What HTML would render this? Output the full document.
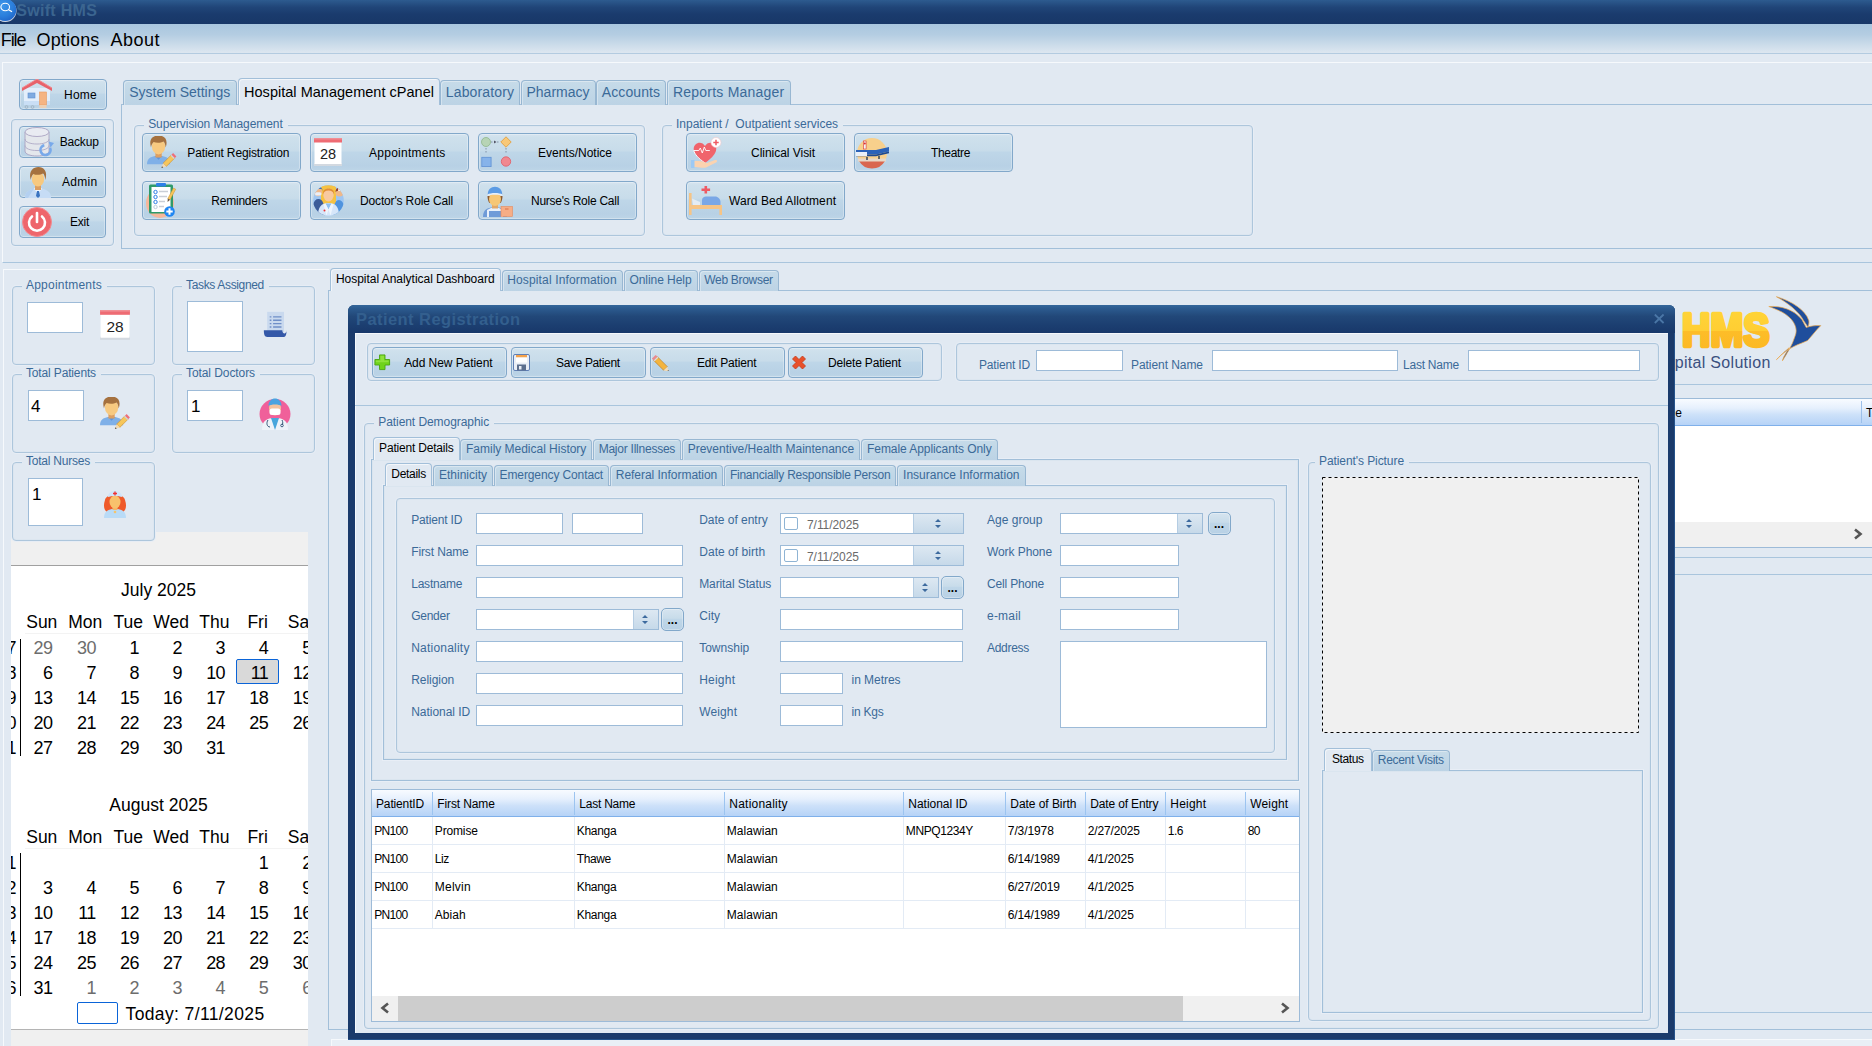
<!DOCTYPE html>
<html lang="en"><head><meta charset="utf-8"><title>Swift HMS</title>
<style>

html,body{margin:0;padding:0;}
body{width:1872px;height:1046px;overflow:hidden;position:relative;background:#e1e9f2;font-family:'Liberation Sans',sans-serif;font-size:12px;}
div,span.t,svg{position:absolute;box-sizing:border-box;}
span.t{white-space:pre;}
.btn{border:1px solid #82a8ca;border-radius:4px;background:linear-gradient(#d6e4ef 0%,#cee0ec 10%,#c8dcea 44%,#bed6e8 50%,#b8d1e5 86%,#bdd5e7 100%);box-shadow:inset 0 0 0 1px rgba(255,255,255,.3);}
.sb{border:1px solid #82a8ca;border-radius:5px;background:linear-gradient(#d6e4ef 0%,#c8dcea 44%,#bed6e8 50%,#b8d1e5 100%);box-shadow:inset 0 0 0 1px rgba(255,255,255,.3);}
.gb{border:1px solid #adc6dc;border-radius:4px;box-shadow:inset 0 0 0 1px #dce6f0,0 0 0 1px #e7edf5;}
.pn{border:1px solid #a2bfd9;background:#e1e9f2;box-shadow:inset 0 0 0 1px #dae5ef,0 0 0 1px #e8eef6;}
.tab{border:1px solid #98b7d2;border-bottom:none;border-radius:4px 4px 0 0;background:linear-gradient(#c6dbe9 0%,#bcd3e5 100%);box-shadow:inset 1px 1px 0 rgba(255,255,255,.35);}
.tab.act{background:#e1e9f2;border-color:#a2bfd9;box-shadow:inset 1px 1px 0 rgba(255,255,255,.6);}
.in{background:#fff;border:1px solid #9dbbd8;}
.hl{height:1px;background:#a2bfd9;}
.vl{width:1px;background:#a2bfd9;}

</style></head>
<body>
<div style="left:0px;top:0px;width:1872px;height:24px;background:linear-gradient(#2d5b8f 0%,#204578 30%,#1a3b6d 60%,#183768 100%);"></div>
<svg style="left:0px;top:0px" width="18" height="24" viewBox="0 0 18 24"><defs><radialGradient id="ag" cx=".35" cy=".3" r=".8"><stop offset="0" stop-color="#3f97ea"/><stop offset=".6" stop-color="#2b7fdc"/><stop offset="1" stop-color="#1f63c8"/></radialGradient></defs><circle cx="5.3" cy="10.8" r="11.2" fill="#d5dbe6"/><circle cx="5.3" cy="10" r="11" fill="url(#ag)"/><ellipse cx="5.2" cy="7" rx="4.3" ry="3.8" fill="none" stroke="#fff" stroke-width="1.1"/><path d="M8.6 9.700l3 1.8" stroke="#fff" stroke-width="1.3" stroke-linecap="round"/></svg>
<span class="t" style="top:0px;line-height:21px;font-size:16px;color:#3b6590;letter-spacing:0.31px;font-weight:700;left:16.2px;">Swift HMS</span>
<div style="left:0px;top:24px;width:1872px;height:29.5px;background:linear-gradient(#a9c6df 0%,#b4cde2 35%,#cfdeeb 75%,#dfe8f1 100%);"></div>
<div style="left:0px;top:53px;width:1872px;height:1px;background:#b3cbe0;"></div>
<span class="t" style="top:28px;line-height:24px;font-size:18px;color:#000;letter-spacing:-1.1px;left:0.8px;">File</span>
<span class="t" style="top:28px;line-height:24px;font-size:18px;color:#000;letter-spacing:0.14px;left:36.5px;">Options</span>
<span class="t" style="top:28px;line-height:24px;font-size:18px;color:#000;letter-spacing:0.49px;left:110.5px;">About</span>
<div style="left:2px;top:62px;width:1874px;height:201px;background:#e1e9f2;border-top:1px solid #f6f9fc;border-left:1px solid #f6f9fc;border-bottom:1px solid #a9c5dd;"></div>
<div class="btn" style="left:19px;top:79px;width:88px;height:31px;"></div>
<span class="t" style="top:86px;line-height:18px;font-size:12px;color:#000;letter-spacing:0.25px;left:64px;">Home</span>
<svg style="left:22px;top:79px" width="32" height="31" viewBox="0 0 32 31"><rect x="2" y="9" width="26" height="17" fill="#e3eefb"/><rect x="2" y="22" width="26" height="4" fill="#c9def5"/><path d="M0 9L15 0L30 9V12L15 4L0 12Z" fill="#e8626a"/><path d="M0 9L15 0L30 9" fill="none" stroke="#f08a8f" stroke-width="1"/><rect x="6" y="14" width="7" height="5" fill="#7faae0" stroke="#5f8fd0" stroke-width=".6"/><rect x="17.5" y="13" width="7" height="13" fill="#f5b483" stroke="#e79a62" stroke-width=".6"/><rect x="17.5" y="26" width="7" height="3" fill="#ecd0b5"/><circle cx="4.5" cy="28" r="1.4" fill="none" stroke="#9ab" stroke-width=".7"/><circle cx="10.5" cy="28" r="1.4" fill="none" stroke="#9ab" stroke-width=".7"/></svg>
<div class="gb" style="left:11px;top:119px;width:103px;height:127px;"></div>
<div class="btn" style="left:19px;top:126px;width:87px;height:31.5px;"></div>
<span class="t" style="top:133px;line-height:18px;font-size:12px;color:#000;letter-spacing:-0.17px;left:59.7px;">Backup</span>
<div class="btn" style="left:19px;top:166px;width:87px;height:31.5px;"></div>
<span class="t" style="top:173px;line-height:18px;font-size:12px;color:#000;letter-spacing:0.3px;left:62px;">Admin</span>
<div class="btn" style="left:19px;top:206px;width:87px;height:31.5px;"></div>
<span class="t" style="top:213px;line-height:18px;font-size:12px;color:#000;letter-spacing:-0.25px;left:70px;">Exit</span>
<svg style="left:23px;top:126px" width="32" height="32" viewBox="0 0 32 32"><path d="M2 6v19c0 3 5 5 12 5s12-2 12-5V6" fill="#e4e7ec" stroke="#a9a3c2" stroke-width=".9"/><ellipse cx="14" cy="6" rx="12" ry="4.5" fill="#e9ebf2" stroke="#a9a3c2" stroke-width=".9"/><path d="M2 13c0 3 5 5 12 5s12-2 12-5M2 19.5c0 3 5 5 12 5s12-2 12-5" fill="none" stroke="#aea9c6" stroke-width=".9"/><circle cx="22.5" cy="24" r="5" fill="none" stroke="#78a9ea" stroke-width="2.6" stroke-dasharray="24 8" transform="rotate(-25 22.5 24)"/><path d="M25.5 15.5l5.5 1.5-3.5 4.5z" fill="#78a9ea"/></svg>
<svg style="left:24.5px;top:166.5px" width="26" height="31" viewBox="0 0 26 31"><path d="M0 31c0-6.5 4-8 9-9.5h8c5 1.5 9 3 9 9.5z" fill="#c6dcf5"/><path d="M0 31c0-6.5 4-8 9-9.5l-6 9.5z" fill="#b4d0f0"/><path d="M9 21.5l4 5.5 4-5.5-2-1h-4z" fill="#eef5fd"/><path d="M12 24h2l1 5-2 2-2-2z" fill="#3b74c0"/><rect x="10" y="17" width="6" height="6" fill="#dc9f62"/><ellipse cx="13" cy="12" rx="6.2" ry="7.6" fill="#f7c980"/><path d="M5.8 13c-2.800-9.5 3-13 7.500-13c5.5 0 9.700 4 7 13c-.3-3.200-1-5.200-2.200-6.400c-3 1.600-7.200 1.600-9.800.4c-1.5 1.600-2.200 3.500-2.500 6z" fill="#a5713f"/></svg>
<svg style="left:22px;top:207px" width="30" height="30" viewBox="0 0 30 30"><circle cx="15" cy="15" r="14.5" fill="#ee666c"/><circle cx="15" cy="15" r="14.5" fill="none" stroke="#f28a8f" stroke-width="1"/><path d="M10 9.500a8 8 0 1 0 10 0" fill="none" stroke="#fff" stroke-width="2.6" stroke-linecap="round"/><path d="M15 6v9" stroke="#fff" stroke-width="2.6" stroke-linecap="round"/></svg>
<div style="left:121px;top:104px;width:1760px;height:145px;border:1px solid #a2bfd9;border-right:none;"></div>
<div class="tab" style="left:123px;top:80px;width:113.5px;height:24.5px;"></div>
<span class="t" style="top:82px;line-height:20px;font-size:14px;color:#3b6a98;letter-spacing:-0.01px;left:103px;width:153.5px;text-align:center;">System Settings</span>
<div class="tab" style="left:440px;top:80px;width:80px;height:24.5px;"></div>
<span class="t" style="top:82px;line-height:20px;font-size:14px;color:#3b6a98;letter-spacing:0.16px;left:420px;width:120px;text-align:center;">Laboratory</span>
<div class="tab" style="left:520.5px;top:80px;width:75px;height:24.5px;"></div>
<span class="t" style="top:82px;line-height:20px;font-size:14px;color:#3b6a98;letter-spacing:-0px;left:500.5px;width:115px;text-align:center;">Pharmacy</span>
<div class="tab" style="left:596px;top:80px;width:70px;height:24.5px;"></div>
<span class="t" style="top:82px;line-height:20px;font-size:14px;color:#3b6a98;letter-spacing:0.11px;left:576px;width:110px;text-align:center;">Accounts</span>
<div class="tab" style="left:666.5px;top:80px;width:124.5px;height:24.5px;"></div>
<span class="t" style="top:82px;line-height:20px;font-size:14px;color:#3b6a98;letter-spacing:0.22px;left:646.5px;width:164.5px;text-align:center;">Reports Manager</span>
<div class="tab act" style="left:238px;top:78.2px;width:202px;height:27px;"></div>
<span class="t" style="top:82px;line-height:20px;font-size:14.5px;color:#000;letter-spacing:0.02px;left:218px;width:242px;text-align:center;">Hospital Management cPanel</span>
<div class="gb" style="left:134px;top:125px;width:511px;height:110.5px;"></div>
<div style="left:144.2px;top:123px;width:143.6px;height:5px;background:#e1e9f2;"></div>
<span class="t" style="top:115px;line-height:18px;font-size:12px;color:#3b6a98;letter-spacing:-0.07px;left:148.2px;">Supervision Management</span>
<div class="btn" style="left:142px;top:133px;width:159px;height:39px;"></div>
<span class="t" style="top:144px;line-height:18px;font-size:12px;color:#000;letter-spacing:-0.14px;left:187.3px;">Patient Registration</span>
<div class="btn" style="left:310px;top:133px;width:159px;height:39px;"></div>
<span class="t" style="top:144px;line-height:18px;font-size:12px;color:#000;letter-spacing:0.26px;left:369px;">Appointments</span>
<div class="btn" style="left:478px;top:133px;width:159px;height:39px;"></div>
<span class="t" style="top:144px;line-height:18px;font-size:12px;color:#000;letter-spacing:-0px;left:538px;">Events/Notice</span>
<div class="btn" style="left:142px;top:181px;width:159px;height:39px;"></div>
<span class="t" style="top:192px;line-height:18px;font-size:12px;color:#000;letter-spacing:-0.23px;left:211.3px;">Reminders</span>
<div class="btn" style="left:310px;top:181px;width:159px;height:39px;"></div>
<span class="t" style="top:192px;line-height:18px;font-size:12px;color:#000;letter-spacing:-0.15px;left:360px;">Doctor&#x27;s Role Call</span>
<div class="btn" style="left:478px;top:181px;width:159px;height:39px;"></div>
<span class="t" style="top:192px;line-height:18px;font-size:12px;color:#000;letter-spacing:-0.25px;left:531px;">Nurse&#x27;s Role Call</span>
<svg style="left:146px;top:136px" width="34" height="34" viewBox="0 0 34 34"><g transform="translate(1 0) scale(1.05)"><path d="M0 27c0-5.5 3-7 7.5-8h7c4.500 1 7.5 2.5 7.5 8z" fill="#7fb0e8"/><path d="M7.5 19l3.5 3.5 3.5-3.5z" fill="#5f94d8"/><rect x="8" y="14.5" width="6" height="6" fill="#dc9f62"/><ellipse cx="11" cy="10" rx="6.3" ry="7.5" fill="#f7c980"/><path d="M3.8 11c-2.600-9 2.700-11.5 7.200-11.5c5.300 0 9.500 3.5 6.800 11.5c-.3-3-1-4.800-2-5.800c-3 1.500-7 1.500-9.500.4c-1.500 1.500-2.200 3.200-2.5 5.400z" fill="#a5713f"/></g><g transform="translate(16.5 31) scale(1.05) rotate(45)"><rect x="-2.2" y="-14" width="4.4" height="11" fill="#f6c65a" stroke="#c98a2b" stroke-width=".5"/><rect x="-2.2" y="-16.5" width="4.4" height="2.5" fill="#ef6f78"/><rect x="-2.2" y="-14.3" width="4.4" height="1.2" fill="#cfd4da"/><path d="M-2.2-3L0 1.500L2.2-3z" fill="#f3d9b0"/><path d="M-.8-.2L0 1.500L.8-.2z" fill="#444"/></g></svg>
<svg style="left:314px;top:137.5px" width="28" height="30" viewBox="0 0 28 30"><rect x="0" y="25" width="28" height="3" fill="#d3d9e0"/><rect x=".5" y="3.5" width="27" height="22.5" fill="#fff"/><rect x="0" y="0" width="28" height="4.5" fill="#ee6b73"/><rect x="0" y="0" width="28" height="1.5" fill="#f08f95"/><text x="14" y="21" font-family="'Liberation Sans',sans-serif" font-size="14.5" text-anchor="middle" fill="#222">28</text></svg>
<svg style="left:481px;top:136px" width="34" height="34" viewBox="0 0 34 34"><path d="M5 12v5M25 12v5M10 6h8" stroke="#7a8aa0" stroke-width=".9" stroke-dasharray="1.5 1.5" fill="none"/><path d="M13 4.500l2.5 1.5-2.5 1.500z" fill="#556"/><circle cx="5" cy="6" r="4.5" fill="#b7d4b5" stroke="#8fb58b" stroke-width=".8"/><path d="M25 .8l5.2 5.2-5.2 5.2-5.2-5.200z" fill="#f8c878" stroke="#e09a3a" stroke-width=".8"/><rect x=".8" y="21.3" width="9.3" height="9.3" fill="#86b3ea" stroke="#5f92d4" stroke-width=".8"/><circle cx="25" cy="25.5" r="4.7" fill="#f08890" stroke="#e05a64" stroke-width=".8"/></svg>
<svg style="left:146px;top:183px" width="34" height="36" viewBox="0 0 34 36"><ellipse cx="14" cy="20" rx="14" ry="15" fill="#f6b79a"/><rect x="3" y="1.5" width="24" height="29" rx="1.5" fill="#2f9a6a"/><rect x="5.5" y="4" width="19" height="25" fill="#fff"/><rect x="10" y="0" width="10" height="3.6" rx="1" fill="#2f80e8"/><g fill="none" stroke="#2f80e8" stroke-width="1"><circle cx="9.5" cy="9" r="1.7"/><circle cx="9.5" cy="14" r="1.7"/><circle cx="9.5" cy="19" r="1.7"/><circle cx="9.5" cy="24" r="1.7" stroke="#bcd"/></g><g stroke="#c9ced6" stroke-width="1.3"><path d="M13 8.500h9M13 13.500h8M13 18.500h6M13 23.500h5"/></g><g transform="translate(22 18) rotate(28)"><rect x="-1.3" y="-14" width="2.6" height="12" fill="#f6c65a" stroke="#c98a2b" stroke-width=".4"/><path d="M-1.3-2L0 1l1.3-3z" fill="#654"/></g><circle cx="23.5" cy="28.5" r="5.3" fill="#1f86f2"/><path d="M23.5 25.300v6.400M20.3 28.500h6.4" stroke="#fff" stroke-width="2"/></svg>
<svg style="left:312.5px;top:184px" width="31" height="32" viewBox="0 0 31 32"><defs><clipPath id="dc"><circle cx="15.5" cy="16.5" r="15.3"/></clipPath></defs><g clip-path="url(#dc)"><rect x="0" y="0" width="31" height="32" fill="#9ec6f2"/><rect x="8" y="0" width="15" height="20" fill="#f5c243"/><path d="M-1 32c0-12 2-17 6.5-17s6 5 6 17z" fill="#3c5c98"/><circle cx="5" cy="8" r="4.2" fill="#efb88a"/><path d="M.6 7c0-6 9-6 9 0l-1-2h-7z" fill="#3f72ba"/><rect x="2" y="8.2" width="6.5" height="3.3" rx="1.5" fill="#e9eff8"/><path d="M20 32c0-10 2-16 6-16s6 6 6 16z" fill="#4f93de"/><circle cx="26.5" cy="8.5" r="4" fill="#efb88a"/><path d="M22.5 8c0-6.5 8-6.5 8 0c-2-2-5.5-2-8 0z" fill="#93402e"/><rect x="25.2" y="0" width="2" height="7" fill="#fff"/><circle cx="26.2" cy="2.5" r="1" fill="#e33"/><path d="M5 32c0-9 3-13 10.5-13s10.5 4 10.5 13z" fill="#d6e6f9"/><path d="M12.5 19.500l3 6 3-6z" fill="#8fc0f0"/><path d="M15.5 25.500l-3-6-2 1 3 11zM15.5 25.500l3-6 2 1-3 11z" fill="#eef5fd"/><ellipse cx="15.5" cy="11" rx="5.2" ry="6.5" fill="#f8c9a0"/><path d="M10 10.500c-1.5-8 12.5-8 11 0c-1-3-2.3-4-5.5-4s-4.5 1-5.5 4z" fill="#e28f38"/><circle cx="11.5" cy="26.5" r="1" fill="#e33"/></g></svg>
<svg style="left:483px;top:184px" width="30" height="33" viewBox="0 0 30 33"><path d="M0 33c0-6.5 3-8.5 8-9.500h8c5 1 8 3 8 9.500z" fill="#6f9bd8"/><path d="M4 33v-7l4-2h8l4 2v7z" fill="#e8f0fa"/><path d="M6 33v-6h12v6z" fill="#6f9bd8"/><rect x="9" y="18" width="6" height="6.5" fill="#e2a868"/><path d="M4.5 12c0 3 1 6 2 7h11c1-1 2-4 2-7z" fill="#8c5a2e"/><ellipse cx="12" cy="15" rx="6" ry="7" fill="#f6c776"/><path d="M4.8 11c-.8-11 15.2-11 14.4 0c-2-1.8-12.4-1.8-14.4 0z" fill="#5b9be4"/><path d="M4.6 10.500c3-2 11.8-2 14.8 0l.1 1.600c-3-1.8-12-1.8-15 0z" fill="#e6effa"/><rect x="18" y="22.5" width="11.5" height="10" fill="#f6ad86" stroke="#e58a5e" stroke-width=".6"/><rect x="22" y="24.5" width="3.5" height="1" fill="#d9734a"/></svg>
<div class="gb" style="left:662px;top:125px;width:591px;height:110.5px;"></div>
<div style="left:672px;top:123px;width:171px;height:5px;background:#e1e9f2;"></div>
<span class="t" style="top:115px;line-height:18px;font-size:12px;color:#3b6a98;letter-spacing:-0px;left:676px;">Inpatient /  Outpatient services</span>
<div class="btn" style="left:686px;top:133px;width:159px;height:39px;"></div>
<span class="t" style="top:144px;line-height:18px;font-size:12px;color:#000;letter-spacing:-0.03px;left:751px;">Clinical Visit</span>
<div class="btn" style="left:854px;top:133px;width:159px;height:39px;"></div>
<span class="t" style="top:144px;line-height:18px;font-size:12px;color:#000;letter-spacing:-0.34px;left:931px;">Theatre</span>
<div class="btn" style="left:686px;top:181px;width:159px;height:39px;"></div>
<span class="t" style="top:192px;line-height:18px;font-size:12px;color:#000;letter-spacing:0.08px;left:729px;">Ward Bed Allotment</span>
<svg style="left:690.5px;top:137px" width="34" height="34" viewBox="0 0 34 34"><path d="M14 26C2 18 1 11 4.5 7.500c3-3 7.5-2 9.5 1.500c2-3.5 6.5-4.5 9.5-1.500c3.5 3.5 2.5 10.5-9.5 18.500z" fill="#f0646c"/><path d="M14 26C7 21 3.5 17 2.8 13.500h5l1.5-2.5 2 5 2-6 1.5 3.500h4" fill="none" stroke="#fff" stroke-width=".9"/><circle cx="25" cy="5.5" r="5" fill="#fff" stroke="#f2c6c8" stroke-width=".6"/><path d="M25 2.800v5.400M22.3 5.500h5.4" stroke="#ef5b63" stroke-width="1.5"/><path d="M2 24h6c3 0 5 1 8 2l8-3c2-.5 3 1.5 1 2.500l-10 5c-3 1-7-.5-10-.5h-3z" fill="#fbd3b0"/><rect x="0" y="23" width="3.5" height="8" fill="#9cc9f5"/></svg>
<svg style="left:855px;top:135.5px" width="36" height="34" viewBox="0 0 36 34"><circle cx="17" cy="17" r="15" fill="#f8d08c"/><path d="M4 25h26a15 15 0 0 1-26 0z" fill="#d9664f"/><rect x="3" y="22.5" width="28" height="3" fill="#e8d8c8"/><rect x="8.5" y="5" width="2.6" height="8" fill="#f4f4f4" stroke="#d33" stroke-width=".6"/><circle cx="9.8" cy="7.5" r="1" fill="#d33"/><path d="M1 14h20l13-3v4.500l-13 3h-20z" fill="#2b62b8"/><path d="M1 18.500h20l13-3v1.800l-13 3h-20z" fill="#1d4a92"/><rect x="1" y="16" width="11" height="4" fill="#eaf0f8"/><path d="M12 21v3M24 20v3" stroke="#345" stroke-width="1.5"/></svg>
<svg style="left:689px;top:186px" width="34" height="32" viewBox="0 0 34 32"><path d="M12.5 2.500h3v-2.500h2.600v2.500h3v2.600h-3v2.500h-2.600v-2.500h-3z" fill="#ee5a64"/><path d="M13 14c0-2 2-3.5 4-3.500h9c3 0 5.5 2.5 5.5 5.500v3h-18.500z" fill="#7aa7e6"/><path d="M3 12.500l8 3.500v3.500h-7z" fill="#e4ecf5"/><rect x="0" y="7" width="2.6" height="22" fill="#f6c486"/><rect x="0" y="19" width="33" height="4" fill="#f6c486"/><rect x="30.4" y="19" width="2.6" height="10" fill="#f6c486"/></svg>
<div style="left:3px;top:269px;width:326px;height:790px;background:#e1e9f2;border-top:1px solid #f6f9fc;border-left:1px solid #f6f9fc;"></div>
<div style="left:11px;top:532px;width:297px;height:520px;background:#f0f0f0;"></div>
<div style="left:11px;top:565px;width:297px;height:465px;background:#fff;border-top:1px solid #a0a0a0;border-bottom:1px solid #b4b4b4;"></div>
<div style="left:12px;top:286px;width:143px;height:79px;background:#e1e9f2;border:1px solid #adc6dc;border-radius:4px;box-shadow:inset 0 0 0 1px #dce6f0,0 0 0 1px #e7edf5;"></div>
<div style="left:22px;top:284px;width:84.5px;height:5px;background:#e1e9f2;"></div>
<span class="t" style="top:276px;line-height:18px;font-size:12px;color:#3b6a98;letter-spacing:0.22px;left:26px;">Appointments</span>
<div style="left:172px;top:286px;width:143px;height:79px;background:#e1e9f2;border:1px solid #adc6dc;border-radius:4px;box-shadow:inset 0 0 0 1px #dce6f0,0 0 0 1px #e7edf5;"></div>
<div style="left:182px;top:284px;width:86.5px;height:5px;background:#e1e9f2;"></div>
<span class="t" style="top:276px;line-height:18px;font-size:12px;color:#3b6a98;letter-spacing:-0.34px;left:186px;">Tasks Assigned</span>
<div style="left:12px;top:374px;width:143px;height:79px;background:#e1e9f2;border:1px solid #adc6dc;border-radius:4px;box-shadow:inset 0 0 0 1px #dce6f0,0 0 0 1px #e7edf5;"></div>
<div style="left:22px;top:372px;width:78.5px;height:5px;background:#e1e9f2;"></div>
<span class="t" style="top:364px;line-height:18px;font-size:12px;color:#3b6a98;letter-spacing:-0.15px;left:26px;">Total Patients</span>
<div style="left:172px;top:374px;width:143px;height:79px;background:#e1e9f2;border:1px solid #adc6dc;border-radius:4px;box-shadow:inset 0 0 0 1px #dce6f0,0 0 0 1px #e7edf5;"></div>
<div style="left:182px;top:372px;width:77.5px;height:5px;background:#e1e9f2;"></div>
<span class="t" style="top:364px;line-height:18px;font-size:12px;color:#3b6a98;letter-spacing:-0.08px;left:186px;">Total Doctors</span>
<div style="left:12px;top:462px;width:143px;height:79px;background:#e1e9f2;border:1px solid #adc6dc;border-radius:4px;box-shadow:inset 0 0 0 1px #dce6f0,0 0 0 1px #e7edf5;"></div>
<div style="left:22px;top:460px;width:72.5px;height:5px;background:#e1e9f2;"></div>
<span class="t" style="top:452px;line-height:18px;font-size:12px;color:#3b6a98;letter-spacing:-0.23px;left:26px;">Total Nurses</span>
<div class="in" style="left:27px;top:302px;width:56px;height:31px;"></div>
<div class="in" style="left:187px;top:301px;width:56px;height:51px;"></div>
<div class="in" style="left:28px;top:390px;width:56px;height:31px;"></div>
<div class="in" style="left:187px;top:390px;width:56px;height:31px;"></div>
<div class="in" style="left:28px;top:478px;width:55px;height:48px;"></div>
<span class="t" style="top:395px;line-height:23px;font-size:17px;color:#000;left:31px;">4</span>
<span class="t" style="top:395px;line-height:23px;font-size:17px;color:#000;left:191px;">1</span>
<span class="t" style="top:483px;line-height:23px;font-size:17px;color:#000;left:32px;">1</span>
<svg style="left:100px;top:310px" width="30" height="32" viewBox="0 0 28 30"><rect x="0" y="25" width="28" height="3" fill="#d3d9e0"/><rect x=".5" y="3.5" width="27" height="22.5" fill="#fff"/><rect x="0" y="0" width="28" height="4.5" fill="#ee6b73"/><rect x="0" y="0" width="28" height="1.5" fill="#f08f95"/><text x="14" y="21" font-family="'Liberation Sans',sans-serif" font-size="14.5" text-anchor="middle" fill="#222">28</text></svg>
<svg style="left:263px;top:311px" width="25.2" height="26.9" viewBox="0 0 30 32"><path d="M5 1h20v24h-20z" fill="#c9d9ee"/><path d="M1 23h22c0 5 5 5 5 0v0c0 6-1 8-4 8h-19c-3 0-4-3-4-8z" fill="#3458a8"/><g stroke="#6f8fc8" stroke-width="1.6"><path d="M8 7h2M12 7h10M8 11h2M12 11h10M8 15h2M12 15h10M8 19h2M12 19h10"/></g></svg>
<svg style="left:99px;top:397px" width="34" height="34" viewBox="0 0 34 34"><g transform="translate(1 0) scale(1.05)"><path d="M0 27c0-5.5 3-7 7.5-8h7c4.500 1 7.5 2.5 7.5 8z" fill="#7fb0e8"/><path d="M7.5 19l3.5 3.5 3.5-3.5z" fill="#5f94d8"/><rect x="8" y="14.5" width="6" height="6" fill="#dc9f62"/><ellipse cx="11" cy="10" rx="6.3" ry="7.5" fill="#f7c980"/><path d="M3.8 11c-2.600-9 2.700-11.5 7.200-11.5c5.300 0 9.500 3.5 6.800 11.5c-.3-3-1-4.800-2-5.800c-3 1.500-7 1.500-9.500.4c-1.500 1.500-2.200 3.200-2.5 5.400z" fill="#a5713f"/></g><g transform="translate(17 31) scale(1.05) rotate(45)"><rect x="-2.2" y="-14" width="4.4" height="11" fill="#f6c65a" stroke="#c98a2b" stroke-width=".5"/><rect x="-2.2" y="-16.5" width="4.4" height="2.5" fill="#ef6f78"/><rect x="-2.2" y="-14.3" width="4.4" height="1.2" fill="#cfd4da"/><path d="M-2.2-3L0 1.500L2.2-3z" fill="#f3d9b0"/><path d="M-.8-.2L0 1.500L.8-.2z" fill="#444"/></g></svg>
<svg style="left:259px;top:396px" width="32" height="34" viewBox="0 0 32 34"><ellipse cx="16" cy="18" rx="15.5" ry="15" fill="#f0609a"/><path d="M3 34c0-9 4-12 13-12s13 3 13 12z" fill="#eef3f9"/><path d="M12 22l4 12 4-12z" fill="#48a6dc"/><ellipse cx="16" cy="12" rx="6" ry="7.5" fill="#f3c29c"/><path d="M9.5 10c0-10 13-10 13 0c-2-2-11-2-13 0z" fill="#4aa3e0"/><rect x="10.5" y="12.5" width="11" height="6.5" rx="2.5" fill="#fff"/><path d="M9 24c-2 3-1 7 2 7M23 24c1 2 1 4 0 5" fill="none" stroke="#357" stroke-width="1"/><circle cx="23" cy="29.5" r="1.3" fill="none" stroke="#357" stroke-width=".9"/></svg>
<svg style="left:103px;top:488px" width="24" height="30" viewBox="0 0 24 30"><path d="M2 12c-2 6-1 10 2 12h16c3-2 4-6 2-12c-1-7-19-7-20 0z" fill="#ef5a2a"/><path d="M1 30c0-6 3-8 8-9h6c5 1 8 3 8 9z" fill="#b9dbf7"/><rect x="9.5" y="17" width="5" height="5" fill="#f2b46a"/><ellipse cx="12" cy="14" rx="5.5" ry="6.5" fill="#f8c16c"/><path d="M5 9c0-8 14-8 14 0c-3-1.5-11-1.5-14 0z" fill="#cfe4fa"/><path d="M12 3.500v4M10 5.500h4" stroke="#e33" stroke-width="1.3"/><circle cx="12" cy="24" r="1.3" fill="#f4c46c"/></svg>
<div style="left:11px;top:567px;width:297px;height:462px;overflow:hidden"><div style="left:-11px;top:-567px;width:400px;height:1100px">
<div style="left:236px;top:659px;width:43px;height:25px;background:#d9d9d9;border:1px solid #0a64d8;border-radius:2px;"></div>
<span class="t" style="top:578px;line-height:24px;font-size:17.5px;color:#000;left:58.5px;width:200px;text-align:center;">July 2025</span>
<span class="t" style="top:610px;line-height:24px;font-size:17.5px;color:#000;left:11.8px;width:60px;text-align:center;">Sun</span>
<span class="t" style="top:610px;line-height:24px;font-size:17.5px;color:#000;left:55.2px;width:60px;text-align:center;">Mon</span>
<span class="t" style="top:610px;line-height:24px;font-size:17.5px;color:#000;left:98.2px;width:60px;text-align:center;">Tue</span>
<span class="t" style="top:610px;line-height:24px;font-size:17.5px;color:#000;left:141.2px;width:60px;text-align:center;">Wed</span>
<span class="t" style="top:610px;line-height:24px;font-size:17.5px;color:#000;left:184.4px;width:60px;text-align:center;">Thu</span>
<span class="t" style="top:610px;line-height:24px;font-size:17.5px;color:#000;left:227.6px;width:60px;text-align:center;">Fri</span>
<span class="t" style="top:610px;line-height:24px;font-size:17.5px;color:#000;left:271px;width:60px;text-align:center;">Sat</span>
<div style="left:25px;top:633px;width:284px;height:1px;background:#f3f3f3;"></div>
<div style="left:20px;top:638.5px;width:1px;height:117px;background:#000;"></div>
<span class="t" style="top:636px;line-height:24px;font-size:18px;color:#000;left:-24.2px;width:40px;text-align:right;letter-spacing:-.6px;">27</span>
<span class="t" style="top:636px;line-height:24px;font-size:18px;color:#6d6d6d;left:12.4px;width:40px;text-align:right;letter-spacing:-.6px;">29</span>
<span class="t" style="top:636px;line-height:24px;font-size:18px;color:#6d6d6d;left:55.8px;width:40px;text-align:right;letter-spacing:-.6px;">30</span>
<span class="t" style="top:636px;line-height:24px;font-size:18px;color:#000;left:98.8px;width:40px;text-align:right;letter-spacing:-.6px;">1</span>
<span class="t" style="top:636px;line-height:24px;font-size:18px;color:#000;left:141.8px;width:40px;text-align:right;letter-spacing:-.6px;">2</span>
<span class="t" style="top:636px;line-height:24px;font-size:18px;color:#000;left:185px;width:40px;text-align:right;letter-spacing:-.6px;">3</span>
<span class="t" style="top:636px;line-height:24px;font-size:18px;color:#000;left:228.2px;width:40px;text-align:right;letter-spacing:-.6px;">4</span>
<span class="t" style="top:636px;line-height:24px;font-size:18px;color:#000;left:271.6px;width:40px;text-align:right;letter-spacing:-.6px;">5</span>
<span class="t" style="top:661px;line-height:24px;font-size:18px;color:#000;left:-24.2px;width:40px;text-align:right;letter-spacing:-.6px;">28</span>
<span class="t" style="top:661px;line-height:24px;font-size:18px;color:#000;left:12.4px;width:40px;text-align:right;letter-spacing:-.6px;">6</span>
<span class="t" style="top:661px;line-height:24px;font-size:18px;color:#000;left:55.8px;width:40px;text-align:right;letter-spacing:-.6px;">7</span>
<span class="t" style="top:661px;line-height:24px;font-size:18px;color:#000;left:98.8px;width:40px;text-align:right;letter-spacing:-.6px;">8</span>
<span class="t" style="top:661px;line-height:24px;font-size:18px;color:#000;left:141.8px;width:40px;text-align:right;letter-spacing:-.6px;">9</span>
<span class="t" style="top:661px;line-height:24px;font-size:18px;color:#000;left:185px;width:40px;text-align:right;letter-spacing:-.6px;">10</span>
<span class="t" style="top:661px;line-height:24px;font-size:18px;color:#000;left:228.2px;width:40px;text-align:right;letter-spacing:-.6px;">11</span>
<span class="t" style="top:661px;line-height:24px;font-size:18px;color:#000;left:271.6px;width:40px;text-align:right;letter-spacing:-.6px;">12</span>
<span class="t" style="top:686px;line-height:24px;font-size:18px;color:#000;left:-24.2px;width:40px;text-align:right;letter-spacing:-.6px;">29</span>
<span class="t" style="top:686px;line-height:24px;font-size:18px;color:#000;left:12.4px;width:40px;text-align:right;letter-spacing:-.6px;">13</span>
<span class="t" style="top:686px;line-height:24px;font-size:18px;color:#000;left:55.8px;width:40px;text-align:right;letter-spacing:-.6px;">14</span>
<span class="t" style="top:686px;line-height:24px;font-size:18px;color:#000;left:98.8px;width:40px;text-align:right;letter-spacing:-.6px;">15</span>
<span class="t" style="top:686px;line-height:24px;font-size:18px;color:#000;left:141.8px;width:40px;text-align:right;letter-spacing:-.6px;">16</span>
<span class="t" style="top:686px;line-height:24px;font-size:18px;color:#000;left:185px;width:40px;text-align:right;letter-spacing:-.6px;">17</span>
<span class="t" style="top:686px;line-height:24px;font-size:18px;color:#000;left:228.2px;width:40px;text-align:right;letter-spacing:-.6px;">18</span>
<span class="t" style="top:686px;line-height:24px;font-size:18px;color:#000;left:271.6px;width:40px;text-align:right;letter-spacing:-.6px;">19</span>
<span class="t" style="top:711px;line-height:24px;font-size:18px;color:#000;left:-24.2px;width:40px;text-align:right;letter-spacing:-.6px;">30</span>
<span class="t" style="top:711px;line-height:24px;font-size:18px;color:#000;left:12.4px;width:40px;text-align:right;letter-spacing:-.6px;">20</span>
<span class="t" style="top:711px;line-height:24px;font-size:18px;color:#000;left:55.8px;width:40px;text-align:right;letter-spacing:-.6px;">21</span>
<span class="t" style="top:711px;line-height:24px;font-size:18px;color:#000;left:98.8px;width:40px;text-align:right;letter-spacing:-.6px;">22</span>
<span class="t" style="top:711px;line-height:24px;font-size:18px;color:#000;left:141.8px;width:40px;text-align:right;letter-spacing:-.6px;">23</span>
<span class="t" style="top:711px;line-height:24px;font-size:18px;color:#000;left:185px;width:40px;text-align:right;letter-spacing:-.6px;">24</span>
<span class="t" style="top:711px;line-height:24px;font-size:18px;color:#000;left:228.2px;width:40px;text-align:right;letter-spacing:-.6px;">25</span>
<span class="t" style="top:711px;line-height:24px;font-size:18px;color:#000;left:271.6px;width:40px;text-align:right;letter-spacing:-.6px;">26</span>
<span class="t" style="top:736px;line-height:24px;font-size:18px;color:#000;left:-24.2px;width:40px;text-align:right;letter-spacing:-.6px;">31</span>
<span class="t" style="top:736px;line-height:24px;font-size:18px;color:#000;left:12.4px;width:40px;text-align:right;letter-spacing:-.6px;">27</span>
<span class="t" style="top:736px;line-height:24px;font-size:18px;color:#000;left:55.8px;width:40px;text-align:right;letter-spacing:-.6px;">28</span>
<span class="t" style="top:736px;line-height:24px;font-size:18px;color:#000;left:98.8px;width:40px;text-align:right;letter-spacing:-.6px;">29</span>
<span class="t" style="top:736px;line-height:24px;font-size:18px;color:#000;left:141.8px;width:40px;text-align:right;letter-spacing:-.6px;">30</span>
<span class="t" style="top:736px;line-height:24px;font-size:18px;color:#000;left:185px;width:40px;text-align:right;letter-spacing:-.6px;">31</span>
<span class="t" style="top:793px;line-height:24px;font-size:17.5px;color:#000;left:58.5px;width:200px;text-align:center;">August 2025</span>
<span class="t" style="top:825px;line-height:24px;font-size:17.5px;color:#000;left:11.8px;width:60px;text-align:center;">Sun</span>
<span class="t" style="top:825px;line-height:24px;font-size:17.5px;color:#000;left:55.2px;width:60px;text-align:center;">Mon</span>
<span class="t" style="top:825px;line-height:24px;font-size:17.5px;color:#000;left:98.2px;width:60px;text-align:center;">Tue</span>
<span class="t" style="top:825px;line-height:24px;font-size:17.5px;color:#000;left:141.2px;width:60px;text-align:center;">Wed</span>
<span class="t" style="top:825px;line-height:24px;font-size:17.5px;color:#000;left:184.4px;width:60px;text-align:center;">Thu</span>
<span class="t" style="top:825px;line-height:24px;font-size:17.5px;color:#000;left:227.6px;width:60px;text-align:center;">Fri</span>
<span class="t" style="top:825px;line-height:24px;font-size:17.5px;color:#000;left:271px;width:60px;text-align:center;">Sat</span>
<div style="left:25px;top:848px;width:284px;height:1px;background:#f3f3f3;"></div>
<div style="left:20px;top:853px;width:1px;height:142.5px;background:#000;"></div>
<span class="t" style="top:851px;line-height:24px;font-size:18px;color:#000;left:-24.2px;width:40px;text-align:right;letter-spacing:-.6px;">31</span>
<span class="t" style="top:851px;line-height:24px;font-size:18px;color:#000;left:228.2px;width:40px;text-align:right;letter-spacing:-.6px;">1</span>
<span class="t" style="top:851px;line-height:24px;font-size:18px;color:#000;left:271.6px;width:40px;text-align:right;letter-spacing:-.6px;">2</span>
<span class="t" style="top:876px;line-height:24px;font-size:18px;color:#000;left:-24.2px;width:40px;text-align:right;letter-spacing:-.6px;">32</span>
<span class="t" style="top:876px;line-height:24px;font-size:18px;color:#000;left:12.4px;width:40px;text-align:right;letter-spacing:-.6px;">3</span>
<span class="t" style="top:876px;line-height:24px;font-size:18px;color:#000;left:55.8px;width:40px;text-align:right;letter-spacing:-.6px;">4</span>
<span class="t" style="top:876px;line-height:24px;font-size:18px;color:#000;left:98.8px;width:40px;text-align:right;letter-spacing:-.6px;">5</span>
<span class="t" style="top:876px;line-height:24px;font-size:18px;color:#000;left:141.8px;width:40px;text-align:right;letter-spacing:-.6px;">6</span>
<span class="t" style="top:876px;line-height:24px;font-size:18px;color:#000;left:185px;width:40px;text-align:right;letter-spacing:-.6px;">7</span>
<span class="t" style="top:876px;line-height:24px;font-size:18px;color:#000;left:228.2px;width:40px;text-align:right;letter-spacing:-.6px;">8</span>
<span class="t" style="top:876px;line-height:24px;font-size:18px;color:#000;left:271.6px;width:40px;text-align:right;letter-spacing:-.6px;">9</span>
<span class="t" style="top:901px;line-height:24px;font-size:18px;color:#000;left:-24.2px;width:40px;text-align:right;letter-spacing:-.6px;">33</span>
<span class="t" style="top:901px;line-height:24px;font-size:18px;color:#000;left:12.4px;width:40px;text-align:right;letter-spacing:-.6px;">10</span>
<span class="t" style="top:901px;line-height:24px;font-size:18px;color:#000;left:55.8px;width:40px;text-align:right;letter-spacing:-.6px;">11</span>
<span class="t" style="top:901px;line-height:24px;font-size:18px;color:#000;left:98.8px;width:40px;text-align:right;letter-spacing:-.6px;">12</span>
<span class="t" style="top:901px;line-height:24px;font-size:18px;color:#000;left:141.8px;width:40px;text-align:right;letter-spacing:-.6px;">13</span>
<span class="t" style="top:901px;line-height:24px;font-size:18px;color:#000;left:185px;width:40px;text-align:right;letter-spacing:-.6px;">14</span>
<span class="t" style="top:901px;line-height:24px;font-size:18px;color:#000;left:228.2px;width:40px;text-align:right;letter-spacing:-.6px;">15</span>
<span class="t" style="top:901px;line-height:24px;font-size:18px;color:#000;left:271.6px;width:40px;text-align:right;letter-spacing:-.6px;">16</span>
<span class="t" style="top:926px;line-height:24px;font-size:18px;color:#000;left:-24.2px;width:40px;text-align:right;letter-spacing:-.6px;">34</span>
<span class="t" style="top:926px;line-height:24px;font-size:18px;color:#000;left:12.4px;width:40px;text-align:right;letter-spacing:-.6px;">17</span>
<span class="t" style="top:926px;line-height:24px;font-size:18px;color:#000;left:55.8px;width:40px;text-align:right;letter-spacing:-.6px;">18</span>
<span class="t" style="top:926px;line-height:24px;font-size:18px;color:#000;left:98.8px;width:40px;text-align:right;letter-spacing:-.6px;">19</span>
<span class="t" style="top:926px;line-height:24px;font-size:18px;color:#000;left:141.8px;width:40px;text-align:right;letter-spacing:-.6px;">20</span>
<span class="t" style="top:926px;line-height:24px;font-size:18px;color:#000;left:185px;width:40px;text-align:right;letter-spacing:-.6px;">21</span>
<span class="t" style="top:926px;line-height:24px;font-size:18px;color:#000;left:228.2px;width:40px;text-align:right;letter-spacing:-.6px;">22</span>
<span class="t" style="top:926px;line-height:24px;font-size:18px;color:#000;left:271.6px;width:40px;text-align:right;letter-spacing:-.6px;">23</span>
<span class="t" style="top:951px;line-height:24px;font-size:18px;color:#000;left:-24.2px;width:40px;text-align:right;letter-spacing:-.6px;">35</span>
<span class="t" style="top:951px;line-height:24px;font-size:18px;color:#000;left:12.4px;width:40px;text-align:right;letter-spacing:-.6px;">24</span>
<span class="t" style="top:951px;line-height:24px;font-size:18px;color:#000;left:55.8px;width:40px;text-align:right;letter-spacing:-.6px;">25</span>
<span class="t" style="top:951px;line-height:24px;font-size:18px;color:#000;left:98.8px;width:40px;text-align:right;letter-spacing:-.6px;">26</span>
<span class="t" style="top:951px;line-height:24px;font-size:18px;color:#000;left:141.8px;width:40px;text-align:right;letter-spacing:-.6px;">27</span>
<span class="t" style="top:951px;line-height:24px;font-size:18px;color:#000;left:185px;width:40px;text-align:right;letter-spacing:-.6px;">28</span>
<span class="t" style="top:951px;line-height:24px;font-size:18px;color:#000;left:228.2px;width:40px;text-align:right;letter-spacing:-.6px;">29</span>
<span class="t" style="top:951px;line-height:24px;font-size:18px;color:#000;left:271.6px;width:40px;text-align:right;letter-spacing:-.6px;">30</span>
<span class="t" style="top:976px;line-height:24px;font-size:18px;color:#000;left:-24.2px;width:40px;text-align:right;letter-spacing:-.6px;">36</span>
<span class="t" style="top:976px;line-height:24px;font-size:18px;color:#000;left:12.4px;width:40px;text-align:right;letter-spacing:-.6px;">31</span>
<span class="t" style="top:976px;line-height:24px;font-size:18px;color:#6d6d6d;left:55.8px;width:40px;text-align:right;letter-spacing:-.6px;">1</span>
<span class="t" style="top:976px;line-height:24px;font-size:18px;color:#6d6d6d;left:98.8px;width:40px;text-align:right;letter-spacing:-.6px;">2</span>
<span class="t" style="top:976px;line-height:24px;font-size:18px;color:#6d6d6d;left:141.8px;width:40px;text-align:right;letter-spacing:-.6px;">3</span>
<span class="t" style="top:976px;line-height:24px;font-size:18px;color:#6d6d6d;left:185px;width:40px;text-align:right;letter-spacing:-.6px;">4</span>
<span class="t" style="top:976px;line-height:24px;font-size:18px;color:#6d6d6d;left:228.2px;width:40px;text-align:right;letter-spacing:-.6px;">5</span>
<span class="t" style="top:976px;line-height:24px;font-size:18px;color:#6d6d6d;left:271.6px;width:40px;text-align:right;letter-spacing:-.6px;">6</span>
<div style="left:77px;top:1001.5px;width:41px;height:22.5px;border:1px solid #0a64d8;border-radius:2px;background:#fff;"></div>
<span class="t" style="top:1002px;line-height:24px;font-size:17.5px;color:#000;letter-spacing:0.38px;left:125.5px;">Today: 7/11/2025</span>
</div></div>
<div style="left:328px;top:290px;width:1560px;height:740px;background:#e1e9f2;border:1px solid #a2bfd9;border-right:none;"></div>
<div class="tab" style="left:501.5px;top:270px;width:121px;height:20.5px;"></div>
<span class="t" style="top:271px;line-height:18px;font-size:12px;color:#3b6a98;letter-spacing:0.14px;left:481.5px;width:161px;text-align:center;">Hospital Information</span>
<div class="tab" style="left:623.5px;top:270px;width:74px;height:20.5px;"></div>
<span class="t" style="top:271px;line-height:18px;font-size:12px;color:#3b6a98;letter-spacing:-0.06px;left:603.5px;width:114px;text-align:center;">Online Help</span>
<div class="tab" style="left:698.5px;top:270px;width:80px;height:20.5px;"></div>
<span class="t" style="top:271px;line-height:18px;font-size:12px;color:#3b6a98;letter-spacing:-0.3px;left:678.5px;width:120px;text-align:center;">Web Browser</span>
<div class="tab act" style="left:330px;top:268px;width:170.5px;height:23px;"></div>
<span class="t" style="top:270px;line-height:18px;font-size:12px;color:#000;letter-spacing:-0.03px;left:310px;width:210.5px;text-align:center;">Hospital Analytical Dashboard</span>
<div style="left:329px;top:1029px;width:1543px;height:17px;background:#e1e9f2;border-top:1px solid #a2bfd9;"></div>
<div style="left:1675px;top:1012px;width:200px;height:1px;background:#a9c5dd;"></div>
<div style="left:331px;top:1039px;width:1545px;height:10px;background:#e9eff6;border-top:1px solid #f6f9fc;border-left:1px solid #f6f9fc;"></div>
<div style="left:1660px;top:384px;width:212px;height:1px;background:#a9c5dd;"></div>
<svg style="left:1560px;top:290px" width="280" height="90" viewBox="0 0 280 90"><defs><linearGradient id="lg" gradientUnits="userSpaceOnUse" x1="0" y1="20" x2="0" y2="58"><stop offset="0" stop-color="#ffd437"/><stop offset=".54" stop-color="#ffce33"/><stop offset=".56" stop-color="#fdbd28"/><stop offset="1" stop-color="#fcb924"/></linearGradient></defs><text x="122" y="56" font-family="'Liberation Sans',sans-serif" font-weight="700" font-size="47" fill="url(#lg)" stroke="url(#lg)" stroke-width="4.4" stroke-linejoin="round" textLength="87.5" lengthAdjust="spacingAndGlyphs">HMS</text><path d="M216.4,6.7 C231.1,10.9 245.5,19.6 248.9,30.7 C249.2,33.4 248.6,35.6 247.9,37.0 L243.7,30.7 C238.8,21.4 226.8,12.2 216.4,6.7Z" fill="#1f4e9c" stroke="#efa94a" stroke-width=".7"/><path d="M208.8,16.5 C221.3,15.8 233.3,19.3 241.8,29.4 L246.2,37.5 C250.8,35.9 255.1,35.4 260.8,35.6 C256.2,40.0 252.4,45.4 247.7,50.5 C239.3,54.5 229.0,56.3 216.4,69.7 C222.4,63.4 226.2,60.3 229.2,57.7 C225.7,63.4 223.3,66.7 222.4,70.8 C227.0,63.4 232.2,55.5 235.0,46.2 C239.3,36.4 231.1,25.2 217.0,19.8 C214.3,18.5 211.5,17.4 208.8,16.5Z" fill="#1f4e9c" stroke="#efa94a" stroke-width=".7"/><text x="210.5999999999999" y="78" text-anchor="end" font-family="'Liberation Sans',sans-serif" font-size="16" letter-spacing=".3" fill="#3b507f">Hospital Solution</text></svg>
<div style="left:1660px;top:398px;width:220px;height:150px;background:#fff;border:1px solid #9dbbd8;"></div>
<div style="left:1661px;top:399px;width:211px;height:27px;background:linear-gradient(#f8fbff 0%,#e6f0fd 35%,#cde1f9 60%,#b6d3f7 100%);border-bottom:1px solid #7fb0ea;"></div>
<span class="t" style="top:404px;line-height:18px;font-size:12px;color:#000;left:1675.3px;">e</span>
<div style="left:1861px;top:401px;width:1px;height:22px;background:#9cc0ea;"></div>
<span class="t" style="top:404px;line-height:18px;font-size:12px;color:#000;left:1866px;">T</span>
<div style="left:1661px;top:522px;width:211px;height:25px;background:#f0f0f0;"></div>
<svg style="left:1852px;top:527px" width="12" height="14" viewBox="0 0 12 14"><path d="M3 2.5l5.5 4.5-5.5 4.5" fill="none" stroke="#555" stroke-width="2.6"/></svg>
<div style="left:1660px;top:557px;width:212px;height:1px;background:#a9c5dd;"></div>
<div style="left:1660px;top:573.5px;width:212px;height:1px;background:#a9c5dd;"></div>
<div style="left:348px;top:305px;width:1327px;height:735px;background:#1a3a6b;border-radius:6px 6px 0 0;box-shadow:inset -1px -1px 0 #25528a;"></div>
<div style="left:348px;top:305px;width:1327px;height:28px;background:linear-gradient(#34679b 0%,#2c5b8f 12%,#224879 40%,#1c3f71 70%,#18386a 100%);border-radius:6px 6px 0 0;"></div>
<div style="left:355px;top:333px;width:1313px;height:700px;background:#e1e9f2;border-top:1px solid #f4f7fb;border-left:1px solid #f4f7fb;"></div>
<span class="t" style="top:308px;line-height:22px;font-size:16.5px;color:#335f8e;letter-spacing:0.43px;font-weight:700;left:356px;">Patient Registration</span>
<svg style="left:1653px;top:313px" width="12" height="12" viewBox="0 0 12 12"><path d="M1.8 1.5l8.8 8.5M10.6 1.5l-8.8 8.5" stroke="#4a76a6" stroke-width="1.8"/></svg>
<div class="gb" style="left:367px;top:343px;width:575px;height:38px;"></div>
<div class="btn" style="left:372px;top:347px;width:135px;height:31px;"></div>
<span class="t" style="top:354px;line-height:18px;font-size:12px;color:#000;letter-spacing:-0.07px;left:404.2px;">Add New Patient</span>
<div class="btn" style="left:511px;top:347px;width:135px;height:31px;"></div>
<span class="t" style="top:354px;line-height:18px;font-size:12px;color:#000;letter-spacing:-0.36px;left:556px;">Save Patient</span>
<div class="btn" style="left:650px;top:347px;width:135px;height:31px;"></div>
<span class="t" style="top:354px;line-height:18px;font-size:12px;color:#000;letter-spacing:-0.16px;left:697px;">Edit Patient</span>
<div class="btn" style="left:788px;top:347px;width:135px;height:31px;"></div>
<span class="t" style="top:354px;line-height:18px;font-size:12px;color:#000;letter-spacing:-0.17px;left:828px;">Delete Patient</span>
<svg style="left:374px;top:354px" width="16.5" height="16.5" viewBox="0 0 18 18"><path d="M6 1h6v5h5v6h-5v5h-6v-5h-5v-6h5z" fill="#6fd31c" stroke="#4aa512" stroke-width="1"/><path d="M7 2h4v5h5v2h-14v-2h5z" fill="#9be84a" opacity=".7"/></svg>
<svg style="left:513px;top:354px" width="17" height="17" viewBox="0 0 17 17"><rect x=".5" y=".5" width="16" height="16" rx="1.5" fill="#e9eef6" stroke="#5f7fb5" stroke-width="1"/><rect x="3" y="1" width="11" height="2.5" fill="#f5a24a"/><rect x="3" y="3.5" width="11" height="5" fill="#fff"/><rect x="4" y="10.5" width="9" height="6" fill="#5c6f8e"/><rect x="6" y="12" width="2.5" height="3.5" fill="#e9eef6"/></svg>
<svg style="left:652px;top:354.5px" width="16.5" height="16.5" viewBox="0 0 16.5 16.5"><g transform="translate(17 17) rotate(-45)"><rect x="-2.6" y="-19" width="5.2" height="14" fill="#f3b43e" stroke="#b9781c" stroke-width=".6"/><rect x="-2.6" y="-21.5" width="5.2" height="2.7" fill="#e98a90"/><rect x="-2.6" y="-19" width="5.2" height="1.3" fill="#d9dde2"/><path d="M-2.6-5L0 0L2.6-5z" fill="#f1dcb8"/><path d="M-1-1.800L0 0L1-1.800z" fill="#333"/></g></svg>
<svg style="left:789.5px;top:354px" width="18" height="18" viewBox="0 0 18 18"><path d="M2.5 5l3-3L9 5.500L12.5 2l3 3L12 8.500l3.5 3.5-3 3L9 11.500L5.5 15l-3-3L6 8.500z" fill="#e8502a" stroke="#c33a18" stroke-width=".8" stroke-linejoin="round"/></svg>
<div class="gb" style="left:956px;top:343px;width:703px;height:38px;"></div>
<span class="t" style="top:356px;line-height:18px;font-size:12px;color:#3b6a98;letter-spacing:-0.17px;left:979px;">Patient ID</span>
<div class="in" style="left:1036px;top:350px;width:87px;height:21px;"></div>
<span class="t" style="top:356px;line-height:18px;font-size:12px;color:#3b6a98;letter-spacing:-0.06px;left:1131px;">Patient Name</span>
<div class="in" style="left:1212px;top:350px;width:186px;height:21px;"></div>
<span class="t" style="top:356px;line-height:18px;font-size:12px;color:#3b6a98;letter-spacing:-0.23px;left:1403px;">Last Name</span>
<div class="in" style="left:1467.5px;top:350px;width:172px;height:21px;"></div>
<div style="left:355px;top:405px;width:1313px;height:1px;background:#a9c5dd;"></div>
<div class="gb" style="left:364px;top:423px;width:1295px;height:606px;"></div>
<div style="left:374.2px;top:421px;width:120px;height:5px;background:#e1e9f2;"></div>
<span class="t" style="top:413px;line-height:18px;font-size:12px;color:#3b6a98;letter-spacing:-0.06px;left:378.2px;">Patient Demographic</span>
<div class="pn" style="left:371px;top:459px;width:928px;height:322px;"></div>
<div class="tab" style="left:460px;top:439px;width:132.4px;height:20.5px;"></div>
<span class="t" style="top:440px;line-height:18px;font-size:12px;color:#3b6a98;letter-spacing:-0.02px;left:440px;width:172.4px;text-align:center;">Family Medical History</span>
<div class="tab" style="left:592.8px;top:439px;width:88.2px;height:20.5px;"></div>
<span class="t" style="top:440px;line-height:18px;font-size:12px;color:#3b6a98;letter-spacing:-0.24px;left:572.8px;width:128.2px;text-align:center;">Major Illnesses</span>
<div class="tab" style="left:681.6px;top:439px;width:178.7px;height:20.5px;"></div>
<span class="t" style="top:440px;line-height:18px;font-size:12px;color:#3b6a98;letter-spacing:-0.01px;left:661.6px;width:218.7px;text-align:center;">Preventive/Health Maintenance</span>
<div class="tab" style="left:860.9px;top:439px;width:136.9px;height:20.5px;"></div>
<span class="t" style="top:440px;line-height:18px;font-size:12px;color:#3b6a98;letter-spacing:-0.07px;left:840.9px;width:176.9px;text-align:center;">Female Applicants Only</span>
<div class="tab act" style="left:373px;top:437px;width:86.6px;height:23px;"></div>
<span class="t" style="top:439px;line-height:18px;font-size:12px;color:#000;letter-spacing:-0.2px;left:353px;width:126.6px;text-align:center;">Patient Details</span>
<div class="pn" style="left:383px;top:485px;width:904px;height:275px;"></div>
<div class="tab" style="left:432.8px;top:465px;width:60.4px;height:20.5px;"></div>
<span class="t" style="top:466px;line-height:18px;font-size:12px;color:#3b6a98;letter-spacing:-0px;left:412.8px;width:100.4px;text-align:center;">Ethinicity</span>
<div class="tab" style="left:493.7px;top:465px;width:115.3px;height:20.5px;"></div>
<span class="t" style="top:466px;line-height:18px;font-size:12px;color:#3b6a98;letter-spacing:-0.11px;left:473.7px;width:155.3px;text-align:center;">Emergency Contact</span>
<div class="tab" style="left:609.7px;top:465px;width:113.7px;height:20.5px;"></div>
<span class="t" style="top:466px;line-height:18px;font-size:12px;color:#3b6a98;letter-spacing:-0.03px;left:589.7px;width:153.7px;text-align:center;">Referal Information</span>
<div class="tab" style="left:723.9px;top:465px;width:172.5px;height:20.5px;"></div>
<span class="t" style="top:466px;line-height:18px;font-size:12px;color:#3b6a98;letter-spacing:-0.23px;left:703.9px;width:212.5px;text-align:center;">Financially Responsible Person</span>
<div class="tab" style="left:897px;top:465px;width:128.6px;height:20.5px;"></div>
<span class="t" style="top:466px;line-height:18px;font-size:12px;color:#3b6a98;letter-spacing:0.02px;left:877px;width:168.6px;text-align:center;">Insurance Information</span>
<div class="tab act" style="left:385px;top:463px;width:47.2px;height:23px;"></div>
<span class="t" style="top:465px;line-height:18px;font-size:12px;color:#000;letter-spacing:-0.31px;left:365px;width:87.2px;text-align:center;">Details</span>
<div class="gb" style="left:396px;top:498px;width:879px;height:255px;"></div>
<span class="t" style="top:511px;line-height:18px;font-size:12px;color:#3b6a98;letter-spacing:-0.17px;left:411.2px;">Patient ID</span>
<span class="t" style="top:543px;line-height:18px;font-size:12px;color:#3b6a98;letter-spacing:-0.12px;left:411.2px;">First Name</span>
<span class="t" style="top:575px;line-height:18px;font-size:12px;color:#3b6a98;letter-spacing:-0.21px;left:411.2px;">Lastname</span>
<span class="t" style="top:607px;line-height:18px;font-size:12px;color:#3b6a98;letter-spacing:-0.26px;left:411.2px;">Gender</span>
<span class="t" style="top:639px;line-height:18px;font-size:12px;color:#3b6a98;letter-spacing:0.22px;left:411.2px;">Nationality</span>
<span class="t" style="top:671px;line-height:18px;font-size:12px;color:#3b6a98;letter-spacing:-0.04px;left:411.2px;">Religion</span>
<span class="t" style="top:703px;line-height:18px;font-size:12px;color:#3b6a98;letter-spacing:-0.03px;left:411.2px;">National ID</span>
<div class="in" style="left:476px;top:513px;width:87px;height:21px;"></div>
<div class="in" style="left:572px;top:513px;width:71px;height:21px;"></div>
<div class="in" style="left:476px;top:545px;width:207px;height:21px;"></div>
<div class="in" style="left:476px;top:577px;width:207px;height:21px;"></div>
<div class="in" style="left:476px;top:641px;width:207px;height:21px;"></div>
<div class="in" style="left:476px;top:673px;width:207px;height:21px;"></div>
<div class="in" style="left:476px;top:705px;width:207px;height:21px;"></div>
<div class="in" style="left:476px;top:609px;width:182.5px;height:21px;"></div>
<div style="left:632.5px;top:610px;width:25px;height:19px;background:linear-gradient(#dde8f2,#c6d9e9);border-left:1px solid #b5cde3;"></div>
<svg style="left:641.0px;top:614px" width="8" height="11" viewBox="0 0 8 11"><path d="M1 4l3-3 3 3zM1 7l3 3 3-3z" fill="#3d6a9e"/></svg>
<div class="sb" style="left:661px;top:608px;width:23px;height:22.5px;"></div>
<span class="t" style="top:611px;line-height:18px;font-size:12px;color:#000;font-weight:700;left:661px;width:23px;text-align:center;">...</span>
<span class="t" style="top:511px;line-height:18px;font-size:12px;color:#3b6a98;letter-spacing:-0.02px;left:699.2px;">Date of entry</span>
<span class="t" style="top:543px;line-height:18px;font-size:12px;color:#3b6a98;letter-spacing:0.05px;left:699.2px;">Date of birth</span>
<span class="t" style="top:575px;line-height:18px;font-size:12px;color:#3b6a98;letter-spacing:-0.1px;left:699.2px;">Marital Status</span>
<span class="t" style="top:607px;line-height:18px;font-size:12px;color:#3b6a98;letter-spacing:0.08px;left:699.2px;">City</span>
<span class="t" style="top:639px;line-height:18px;font-size:12px;color:#3b6a98;letter-spacing:-0px;left:699.2px;">Township</span>
<span class="t" style="top:671px;line-height:18px;font-size:12px;color:#3b6a98;letter-spacing:0.22px;left:699.2px;">Height</span>
<span class="t" style="top:703px;line-height:18px;font-size:12px;color:#3b6a98;letter-spacing:0.14px;left:699.2px;">Weight</span>
<div class="in" style="left:780px;top:513px;width:184px;height:21px;"></div>
<div style="left:784px;top:516.5px;width:13.5px;height:13.5px;background:#fff;border:1px solid #8fb4d4;border-radius:2px;"></div>
<span class="t" style="top:516px;line-height:18px;font-size:12px;color:#6a6a6a;letter-spacing:-0.06px;left:807px;">7/11/2025</span>
<div style="left:913px;top:514px;width:50px;height:19px;background:linear-gradient(#dde8f2,#c6d9e9);border-left:1px solid #b5cde3;"></div>
<svg style="left:933.5px;top:518px" width="8" height="11" viewBox="0 0 8 11"><path d="M1 4l3-3 3 3zM1 7l3 3 3-3z" fill="#3d6a9e"/></svg>
<div class="in" style="left:780px;top:545px;width:184px;height:21px;"></div>
<div style="left:784px;top:548.5px;width:13.5px;height:13.5px;background:#fff;border:1px solid #8fb4d4;border-radius:2px;"></div>
<span class="t" style="top:548px;line-height:18px;font-size:12px;color:#6a6a6a;letter-spacing:-0.06px;left:807px;">7/11/2025</span>
<div style="left:913px;top:546px;width:50px;height:19px;background:linear-gradient(#dde8f2,#c6d9e9);border-left:1px solid #b5cde3;"></div>
<svg style="left:933.5px;top:550px" width="8" height="11" viewBox="0 0 8 11"><path d="M1 4l3-3 3 3zM1 7l3 3 3-3z" fill="#3d6a9e"/></svg>
<div class="in" style="left:780px;top:577px;width:158.5px;height:21px;"></div>
<div style="left:912.5px;top:578px;width:25px;height:19px;background:linear-gradient(#dde8f2,#c6d9e9);border-left:1px solid #b5cde3;"></div>
<svg style="left:921.0px;top:582px" width="8" height="11" viewBox="0 0 8 11"><path d="M1 4l3-3 3 3zM1 7l3 3 3-3z" fill="#3d6a9e"/></svg>
<div class="sb" style="left:941px;top:576px;width:23px;height:22.5px;"></div>
<span class="t" style="top:579px;line-height:18px;font-size:12px;color:#000;font-weight:700;left:941px;width:23px;text-align:center;">...</span>
<div class="in" style="left:780px;top:609px;width:183px;height:21px;"></div>
<div class="in" style="left:780px;top:641px;width:183px;height:21px;"></div>
<div class="in" style="left:780px;top:673px;width:63px;height:21px;"></div>
<div class="in" style="left:780px;top:705px;width:63px;height:21px;"></div>
<span class="t" style="top:671px;line-height:18px;font-size:12px;color:#3b6a98;letter-spacing:-0.04px;left:851.5px;">in Metres</span>
<span class="t" style="top:703px;line-height:18px;font-size:12px;color:#3b6a98;letter-spacing:-0.23px;left:851.5px;">in Kgs</span>
<span class="t" style="top:511px;line-height:18px;font-size:12px;color:#3b6a98;letter-spacing:0.01px;left:987px;">Age group</span>
<span class="t" style="top:543px;line-height:18px;font-size:12px;color:#3b6a98;letter-spacing:-0.08px;left:987px;">Work Phone</span>
<span class="t" style="top:575px;line-height:18px;font-size:12px;color:#3b6a98;letter-spacing:-0.17px;left:987px;">Cell Phone</span>
<span class="t" style="top:607px;line-height:18px;font-size:12px;color:#3b6a98;letter-spacing:0.22px;left:987px;">e-mail</span>
<span class="t" style="top:639px;line-height:18px;font-size:12px;color:#3b6a98;letter-spacing:-0.29px;left:987px;">Address</span>
<div class="in" style="left:1060px;top:513px;width:142.5px;height:21px;"></div>
<div style="left:1176.5px;top:514px;width:25px;height:19px;background:linear-gradient(#dde8f2,#c6d9e9);border-left:1px solid #b5cde3;"></div>
<svg style="left:1185.0px;top:518px" width="8" height="11" viewBox="0 0 8 11"><path d="M1 4l3-3 3 3zM1 7l3 3 3-3z" fill="#3d6a9e"/></svg>
<div class="sb" style="left:1207.5px;top:512px;width:23px;height:22.5px;"></div>
<span class="t" style="top:515px;line-height:18px;font-size:12px;color:#000;font-weight:700;left:1207.5px;width:23px;text-align:center;">...</span>
<div class="in" style="left:1060px;top:545px;width:119px;height:21px;"></div>
<div class="in" style="left:1060px;top:577px;width:119px;height:21px;"></div>
<div class="in" style="left:1060px;top:609px;width:119px;height:21px;"></div>
<div class="in" style="left:1060px;top:641px;width:207px;height:87px;"></div>
<div class="gb" style="left:1308px;top:462px;width:343px;height:559px;"></div>
<div style="left:1315px;top:460px;width:94px;height:5px;background:#e1e9f2;"></div>
<span class="t" style="top:452px;line-height:18px;font-size:12px;color:#3b6a98;letter-spacing:-0.08px;left:1319px;">Patient&#x27;s Picture</span>
<div style="left:1322px;top:477px;width:317px;height:256px;background:#f0f0f0;"></div>
<svg style="left:1322px;top:477px" width="317" height="256"><rect x=".5" y=".5" width="316" height="255" fill="none" stroke="#000" stroke-width="1" stroke-dasharray="3 3"/></svg>
<div class="pn" style="left:1322px;top:770px;width:321px;height:243px;"></div>
<div class="tab" style="left:1372px;top:750px;width:77.6px;height:20.5px;"></div>
<span class="t" style="top:751px;line-height:18px;font-size:12px;color:#3b6a98;letter-spacing:-0.29px;left:1352px;width:117.6px;text-align:center;">Recent Visits</span>
<div class="tab act" style="left:1324px;top:748px;width:47.5px;height:23px;"></div>
<span class="t" style="top:750px;line-height:18px;font-size:12px;color:#000;letter-spacing:-0.42px;left:1304px;width:87.5px;text-align:center;">Status</span>
<div style="left:371px;top:789px;width:929px;height:233px;background:#fff;border:1px solid #9dbbd8;"></div>
<div style="left:372px;top:790px;width:927px;height:27px;background:linear-gradient(#f8fbff 0%,#e6f0fd 35%,#cde1f9 60%,#b6d3f7 100%);border-bottom:1px solid #7fb0ea;"></div>
<span class="t" style="top:795px;line-height:18px;font-size:12px;color:#000;letter-spacing:-0.15px;left:376px;">PatientID</span>
<span class="t" style="top:795px;line-height:18px;font-size:12px;color:#000;letter-spacing:-0.12px;left:437.3px;">First Name</span>
<div style="left:432px;top:792px;width:1px;height:23px;background:#9cc4f0;"></div>
<span class="t" style="top:795px;line-height:18px;font-size:12px;color:#000;letter-spacing:-0.23px;left:579.3px;">Last Name</span>
<div style="left:574px;top:792px;width:1px;height:23px;background:#9cc4f0;"></div>
<span class="t" style="top:795px;line-height:18px;font-size:12px;color:#000;letter-spacing:0.22px;left:729.3px;">Nationality</span>
<div style="left:724px;top:792px;width:1px;height:23px;background:#9cc4f0;"></div>
<span class="t" style="top:795px;line-height:18px;font-size:12px;color:#000;letter-spacing:-0.03px;left:908.3px;">National ID</span>
<div style="left:903px;top:792px;width:1px;height:23px;background:#9cc4f0;"></div>
<span class="t" style="top:795px;line-height:18px;font-size:12px;color:#000;letter-spacing:-0.05px;left:1010.3px;">Date of Birth</span>
<div style="left:1005px;top:792px;width:1px;height:23px;background:#9cc4f0;"></div>
<span class="t" style="top:795px;line-height:18px;font-size:12px;color:#000;letter-spacing:-0.16px;left:1090.3px;">Date of Entry</span>
<div style="left:1085px;top:792px;width:1px;height:23px;background:#9cc4f0;"></div>
<span class="t" style="top:795px;line-height:18px;font-size:12px;color:#000;letter-spacing:0.22px;left:1170.3px;">Height</span>
<div style="left:1165px;top:792px;width:1px;height:23px;background:#9cc4f0;"></div>
<span class="t" style="top:795px;line-height:18px;font-size:12px;color:#000;letter-spacing:0.14px;left:1250.3px;">Weight</span>
<div style="left:1245px;top:792px;width:1px;height:23px;background:#9cc4f0;"></div>
<div style="left:372px;top:844px;width:927px;height:1px;background:#e3ebf5;"></div>
<span class="t" style="top:822px;line-height:18px;font-size:12px;color:#000;letter-spacing:-0.68px;left:374.3px;">PN100</span>
<span class="t" style="top:822px;line-height:18px;font-size:12px;color:#000;letter-spacing:-0.15px;left:434.8px;">Promise</span>
<span class="t" style="top:822px;line-height:18px;font-size:12px;color:#000;letter-spacing:-0.31px;left:576.8px;">Khanga</span>
<span class="t" style="top:822px;line-height:18px;font-size:12px;color:#000;letter-spacing:0.04px;left:726.8px;">Malawian</span>
<span class="t" style="top:822px;line-height:18px;font-size:12px;color:#000;letter-spacing:-0.41px;left:905.8px;">MNPQ1234Y</span>
<span class="t" style="top:822px;line-height:18px;font-size:12px;color:#000;letter-spacing:-0.09px;left:1007.8px;">7/3/1978</span>
<span class="t" style="top:822px;line-height:18px;font-size:12px;color:#000;letter-spacing:-0.15px;left:1087.8px;">2/27/2025</span>
<span class="t" style="top:822px;line-height:18px;font-size:12px;color:#000;letter-spacing:-0.56px;left:1167.8px;">1.6</span>
<span class="t" style="top:822px;line-height:18px;font-size:12px;color:#000;letter-spacing:-0.68px;left:1247.8px;">80</span>
<div style="left:372px;top:872px;width:927px;height:1px;background:#e3ebf5;"></div>
<span class="t" style="top:850px;line-height:18px;font-size:12px;color:#000;letter-spacing:-0.68px;left:374.3px;">PN100</span>
<span class="t" style="top:850px;line-height:18px;font-size:12px;color:#000;letter-spacing:-0.45px;left:434.8px;">Liz</span>
<span class="t" style="top:850px;line-height:18px;font-size:12px;color:#000;letter-spacing:-0.41px;left:576.8px;">Thawe</span>
<span class="t" style="top:850px;line-height:18px;font-size:12px;color:#000;letter-spacing:0.04px;left:726.8px;">Malawian</span>
<span class="t" style="top:850px;line-height:18px;font-size:12px;color:#000;letter-spacing:-0.15px;left:1007.8px;">6/14/1989</span>
<span class="t" style="top:850px;line-height:18px;font-size:12px;color:#000;letter-spacing:-0.09px;left:1087.8px;">4/1/2025</span>
<div style="left:372px;top:900px;width:927px;height:1px;background:#e3ebf5;"></div>
<span class="t" style="top:878px;line-height:18px;font-size:12px;color:#000;letter-spacing:-0.68px;left:374.3px;">PN100</span>
<span class="t" style="top:878px;line-height:18px;font-size:12px;color:#000;letter-spacing:0.22px;left:434.8px;">Melvin</span>
<span class="t" style="top:878px;line-height:18px;font-size:12px;color:#000;letter-spacing:-0.31px;left:576.8px;">Khanga</span>
<span class="t" style="top:878px;line-height:18px;font-size:12px;color:#000;letter-spacing:0.04px;left:726.8px;">Malawian</span>
<span class="t" style="top:878px;line-height:18px;font-size:12px;color:#000;letter-spacing:-0.15px;left:1007.8px;">6/27/2019</span>
<span class="t" style="top:878px;line-height:18px;font-size:12px;color:#000;letter-spacing:-0.09px;left:1087.8px;">4/1/2025</span>
<div style="left:372px;top:928px;width:927px;height:1px;background:#e3ebf5;"></div>
<span class="t" style="top:906px;line-height:18px;font-size:12px;color:#000;letter-spacing:-0.68px;left:374.3px;">PN100</span>
<span class="t" style="top:906px;line-height:18px;font-size:12px;color:#000;letter-spacing:0.06px;left:434.8px;">Abiah</span>
<span class="t" style="top:906px;line-height:18px;font-size:12px;color:#000;letter-spacing:-0.31px;left:576.8px;">Khanga</span>
<span class="t" style="top:906px;line-height:18px;font-size:12px;color:#000;letter-spacing:0.04px;left:726.8px;">Malawian</span>
<span class="t" style="top:906px;line-height:18px;font-size:12px;color:#000;letter-spacing:-0.15px;left:1007.8px;">6/14/1989</span>
<span class="t" style="top:906px;line-height:18px;font-size:12px;color:#000;letter-spacing:-0.09px;left:1087.8px;">4/1/2025</span>
<div style="left:432px;top:817px;width:1px;height:112px;background:#e3ebf5;"></div>
<div style="left:574px;top:817px;width:1px;height:112px;background:#e3ebf5;"></div>
<div style="left:724px;top:817px;width:1px;height:112px;background:#e3ebf5;"></div>
<div style="left:903px;top:817px;width:1px;height:112px;background:#e3ebf5;"></div>
<div style="left:1005px;top:817px;width:1px;height:112px;background:#e3ebf5;"></div>
<div style="left:1085px;top:817px;width:1px;height:112px;background:#e3ebf5;"></div>
<div style="left:1165px;top:817px;width:1px;height:112px;background:#e3ebf5;"></div>
<div style="left:1245px;top:817px;width:1px;height:112px;background:#e3ebf5;"></div>
<div style="left:372px;top:996px;width:927px;height:25px;background:#f0f0f0;"></div>
<div style="left:398px;top:996px;width:785px;height:25px;background:#cdcdcd;"></div>
<svg style="left:379px;top:1001px" width="12" height="14" viewBox="0 0 12 14"><path d="M9 2.5l-5.5 4.5 5.5 4.5" fill="none" stroke="#555" stroke-width="2.6"/></svg>
<svg style="left:1279px;top:1001px" width="12" height="14" viewBox="0 0 12 14"><path d="M3 2.5l5.5 4.5-5.5 4.5" fill="none" stroke="#555" stroke-width="2.6"/></svg>
</body></html>
